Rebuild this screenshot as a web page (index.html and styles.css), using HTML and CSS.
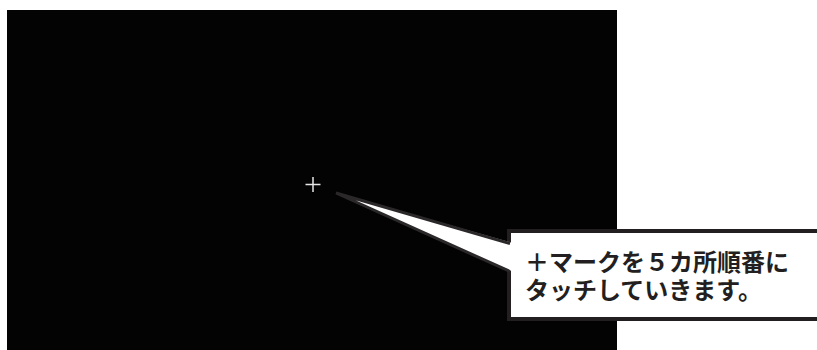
FILE: index.html
```html
<!DOCTYPE html>
<html lang="ja">
<head>
<meta charset="utf-8">
<link rel="stylesheet" href="styles.css">
</head>
<body>
<div class="screen"></div>
<div class="callout">
  <div class="callout-line">＋マークを５カ所順番に</div>
  <div class="callout-line">タッチしていきます。</div>
</div>
<svg class="overlay" width="817" height="350" viewBox="0 0 817 350">
  <path class="plus" d="M305.5 184.5 H320.5 M313 177 V192"/>
  <polygon class="pointer-fill" points="336,193 513,243 513,272"/>
  <polyline class="pointer-edge" points="510,243.5 336,193 510,271.5"/>
</svg>
</body>
</html>
```
FILE: styles.css
```css
html, body {
  margin: 0;
  padding: 0;
  background: #fff;
  overflow: hidden;
  width: 817px;
  height: 350px;
}
body {
  position: relative;
  font-family: "Noto Sans CJK JP", "Noto Sans", sans-serif;
}
.screen {
  margin: 10px 0 0 7px;
  width: 610px;
  height: 340px;
  background: #030303;
}
.callout {
  position: absolute;
  left: 507px;
  top: 229px;
  width: 340px;
  height: 84px;
  padding: 14px 0 0 14px;
  box-sizing: border-box;
  height: 92px;
  background: #fff;
  border: 4px solid #231f20;
}
.callout-line {
  height: 28px;
  font-size: 24px;
  line-height: 28px;
  font-weight: 700;
  color: #231f20;
  white-space: nowrap;
}
.overlay {
  position: absolute;
  left: 0;
  top: 0;
}
.plus {
  stroke: #e6e6e6;
  stroke-width: 1.5;
  fill: none;
}
.pointer-fill {
  fill: #fff;
}
.pointer-edge {
  fill: none;
  stroke: #2b2829;
  stroke-width: 3;
  stroke-linejoin: miter;
}
```
